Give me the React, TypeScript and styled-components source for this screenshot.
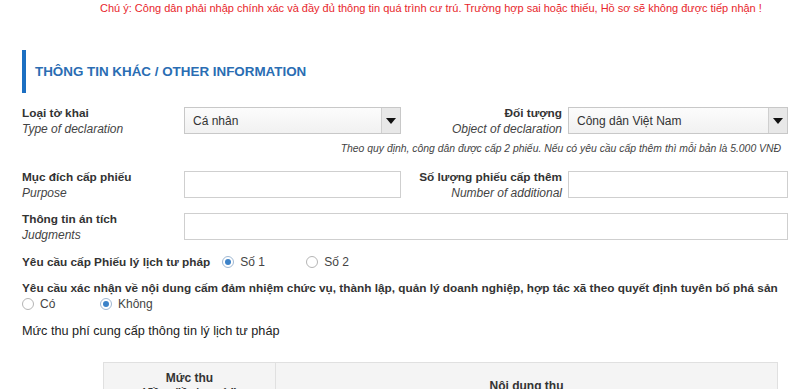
import styled, { createGlobalStyle } from "styled-components"

const GlobalStyle = createGlobalStyle`
  html, body {
    margin: 0;
    padding: 0;
    background: #fff;
  }
  body {
    font-family: "Liberation Sans", Arial, sans-serif;
    color: #333;
    font-size: 12px;
  }
`

const Page = styled.div`
  width: 800px;
  padding: 0 12px 0 22px;
  box-sizing: border-box;
`

const Notice = styled.div`
  color: #e8262b;
  font-size: 11px;
  line-height: 14px;
  padding: 1px 0 0 78px;
  white-space: nowrap;
`

const SectionTitle = styled.h3`
  margin: 35px 0 0;
  height: 43px;
  display: flex;
  align-items: center;
  border-left: 4px solid #1c6fc2;
  padding-left: 9px;
  color: #2a6db3;
  font-size: 13.4px;
  font-weight: bold;
  text-transform: uppercase;
`

const FormGrid = styled.div`
  display: grid;
  grid-template-columns: 162px 217px 167px 220px;
  margin-top: 12px;
`

const Label = styled.div<{ $right?: boolean }>`
  line-height: 16px;
  text-align: ${(p) => (p.$right ? "right" : "left")};
  padding-right: ${(p) => (p.$right ? "6px" : "0")};

  b {
    display: block;
    font-weight: bold;
    font-size: 11.8px;
    color: #333;
  }
  i {
    display: block;
    color: #444;
  }
`

const Control = styled.div<{ $span?: number }>`
  grid-column: span ${(p) => p.$span ?? 1};
  padding-top: 2px;
`

const SelectBox = styled.div`
  height: 27px;
  border: 1px solid #c8c8c8;
  box-sizing: border-box;
  background: linear-gradient(#fcfcfc, #f1f1f1);
  display: flex;
  align-items: center;
  font-size: 12px;
  color: #333;
`

const SelectText = styled.span`
  flex: 1;
  padding-left: 8px;
`

const SelectArrow = styled.span`
  width: 18px;
  align-self: stretch;
  border-left: 1px solid #cfcfcf;
  background: #e8e8e8;
  display: flex;
  align-items: center;
  justify-content: center;

  &::after {
    content: "";
    border-left: 5px solid transparent;
    border-right: 5px solid transparent;
    border-top: 6px solid #111;
  }
`

const TextInput = styled.div`
  height: 27px;
  border: 1px solid #cfcfcf;
  box-sizing: border-box;
  background: #fff;
`

const Note = styled.div`
  grid-column: 1 / -1;
  text-align: right;
  font-style: italic;
  font-size: 10.4px;
  line-height: 14px;
  color: #444;
  padding: 5px 7px 13px 0;
`

const Spacer = styled.div`
  grid-column: 1 / -1;
  height: 10px;
`

const RadioRow = styled.div<{ $mt: number }>`
  display: flex;
  align-items: center;
  margin-top: ${(p) => p.$mt}px;
  line-height: 16px;
`

const Question = styled.span`
  font-weight: bold;
  font-size: 11.8px;
  margin-right: 12px;
`

const QuestionLine = styled.div`
  font-weight: bold;
  font-size: 11.8px;
  line-height: 16px;
  margin-top: 10px;
  white-space: nowrap;
`

const Option = styled.label<{ $w: number }>`
  display: flex;
  align-items: center;
  width: ${(p) => p.$w}px;
  color: #444;
`

const Dot = styled.span<{ $checked?: boolean }>`
  width: 12px;
  height: 12px;
  border-radius: 50%;
  border: 1px solid ${(p) => (p.$checked ? "#9fb8d3" : "#b5b5b5")};
  background: #fff;
  box-sizing: border-box;
  margin-right: 6px;
  display: flex;
  align-items: center;
  justify-content: center;

  &::after {
    content: "";
    display: ${(p) => (p.$checked ? "block" : "none")};
    width: 6px;
    height: 6px;
    border-radius: 50%;
    background: #3c82c8;
  }
`

const FeeTitle = styled.div`
  margin-top: 11px;
  line-height: 16px;
  font-size: 12.7px;
  color: #222;
`

const FeeTable = styled.table`
  margin: 23px 0 0 81px;
  width: 675px;
  border-collapse: collapse;

  th {
    background: #f4f4f4;
    border: 1px solid #e0e0e0;
    font-weight: bold;
    font-size: 12px;
    line-height: 15px;
    color: #333;
    padding: 8px 4px;
  }
`

function Select({ value }: { value: string }) {
  return (
    <SelectBox>
      <SelectText>{value}</SelectText>
      <SelectArrow />
    </SelectBox>
  )
}

function Radio({ label, checked, width }: { label: string; checked?: boolean; width: number }) {
  return (
    <Option $w={width}>
      <Dot $checked={checked} />
      {label}
    </Option>
  )
}

export default function App() {
  return (
    <>
      <GlobalStyle />
      <Page>
        <Notice>
          Chú ý: Công dân phải nhập chính xác và đầy đủ thông tin quá trình cư trú. Trường hợp sai hoặc thiếu, Hồ sơ sẽ không được tiếp nhận !
        </Notice>

        <SectionTitle>Thông tin khác / Other information</SectionTitle>

        <FormGrid>
          <Label>
            <b>Loại tờ khai</b>
            <i>Type of declaration</i>
          </Label>
          <Control>
            <Select value="Cá nhân" />
          </Control>
          <Label $right>
            <b>Đối tượng</b>
            <i>Object of declaration</i>
          </Label>
          <Control>
            <Select value="Công dân Việt Nam" />
          </Control>

          <Note>
            Theo quy định, công dân được cấp 2 phiếu. Nếu có yêu cầu cấp thêm thì mỗi bản là 5.000 VNĐ
          </Note>

          <Label>
            <b>Mục đích cấp phiếu</b>
            <i>Purpose</i>
          </Label>
          <Control>
            <TextInput />
          </Control>
          <Label $right>
            <b>Số lượng phiếu cấp thêm</b>
            <i>Number of additional</i>
          </Label>
          <Control>
            <TextInput />
          </Control>

          <Spacer />

          <Label>
            <b>Thông tin án tích</b>
            <i>Judgments</i>
          </Label>
          <Control $span={3}>
            <TextInput />
          </Control>
        </FormGrid>

        <RadioRow $mt={11}>
          <Question>Yêu cầu cấp Phiếu lý lịch tư pháp</Question>
          <Radio label="Số 1" checked width={84} />
          <Radio label="Số 2" width={84} />
        </RadioRow>

        <QuestionLine>
          Yêu cầu xác nhận về nội dung cấm đảm nhiệm chức vụ, thành lập, quản lý doanh nghiệp, hợp tác xã theo quyết định tuyên bố phá sản
        </QuestionLine>
        <RadioRow $mt={0}>
          <Radio label="Có" width={78} />
          <Radio label="Không" checked width={80} />
        </RadioRow>

        <FeeTitle>Mức thu phí cung cấp thông tin lý lịch tư pháp</FeeTitle>

        <FeeTable>
          <thead>
            <tr>
              <th style={{ width: 163 }}>
                Mức thu
                <br />
                (đồng/lần/người)
              </th>
              <th>Nội dung thu</th>
            </tr>
          </thead>
        </FeeTable>
      </Page>
    </>
  )
}
